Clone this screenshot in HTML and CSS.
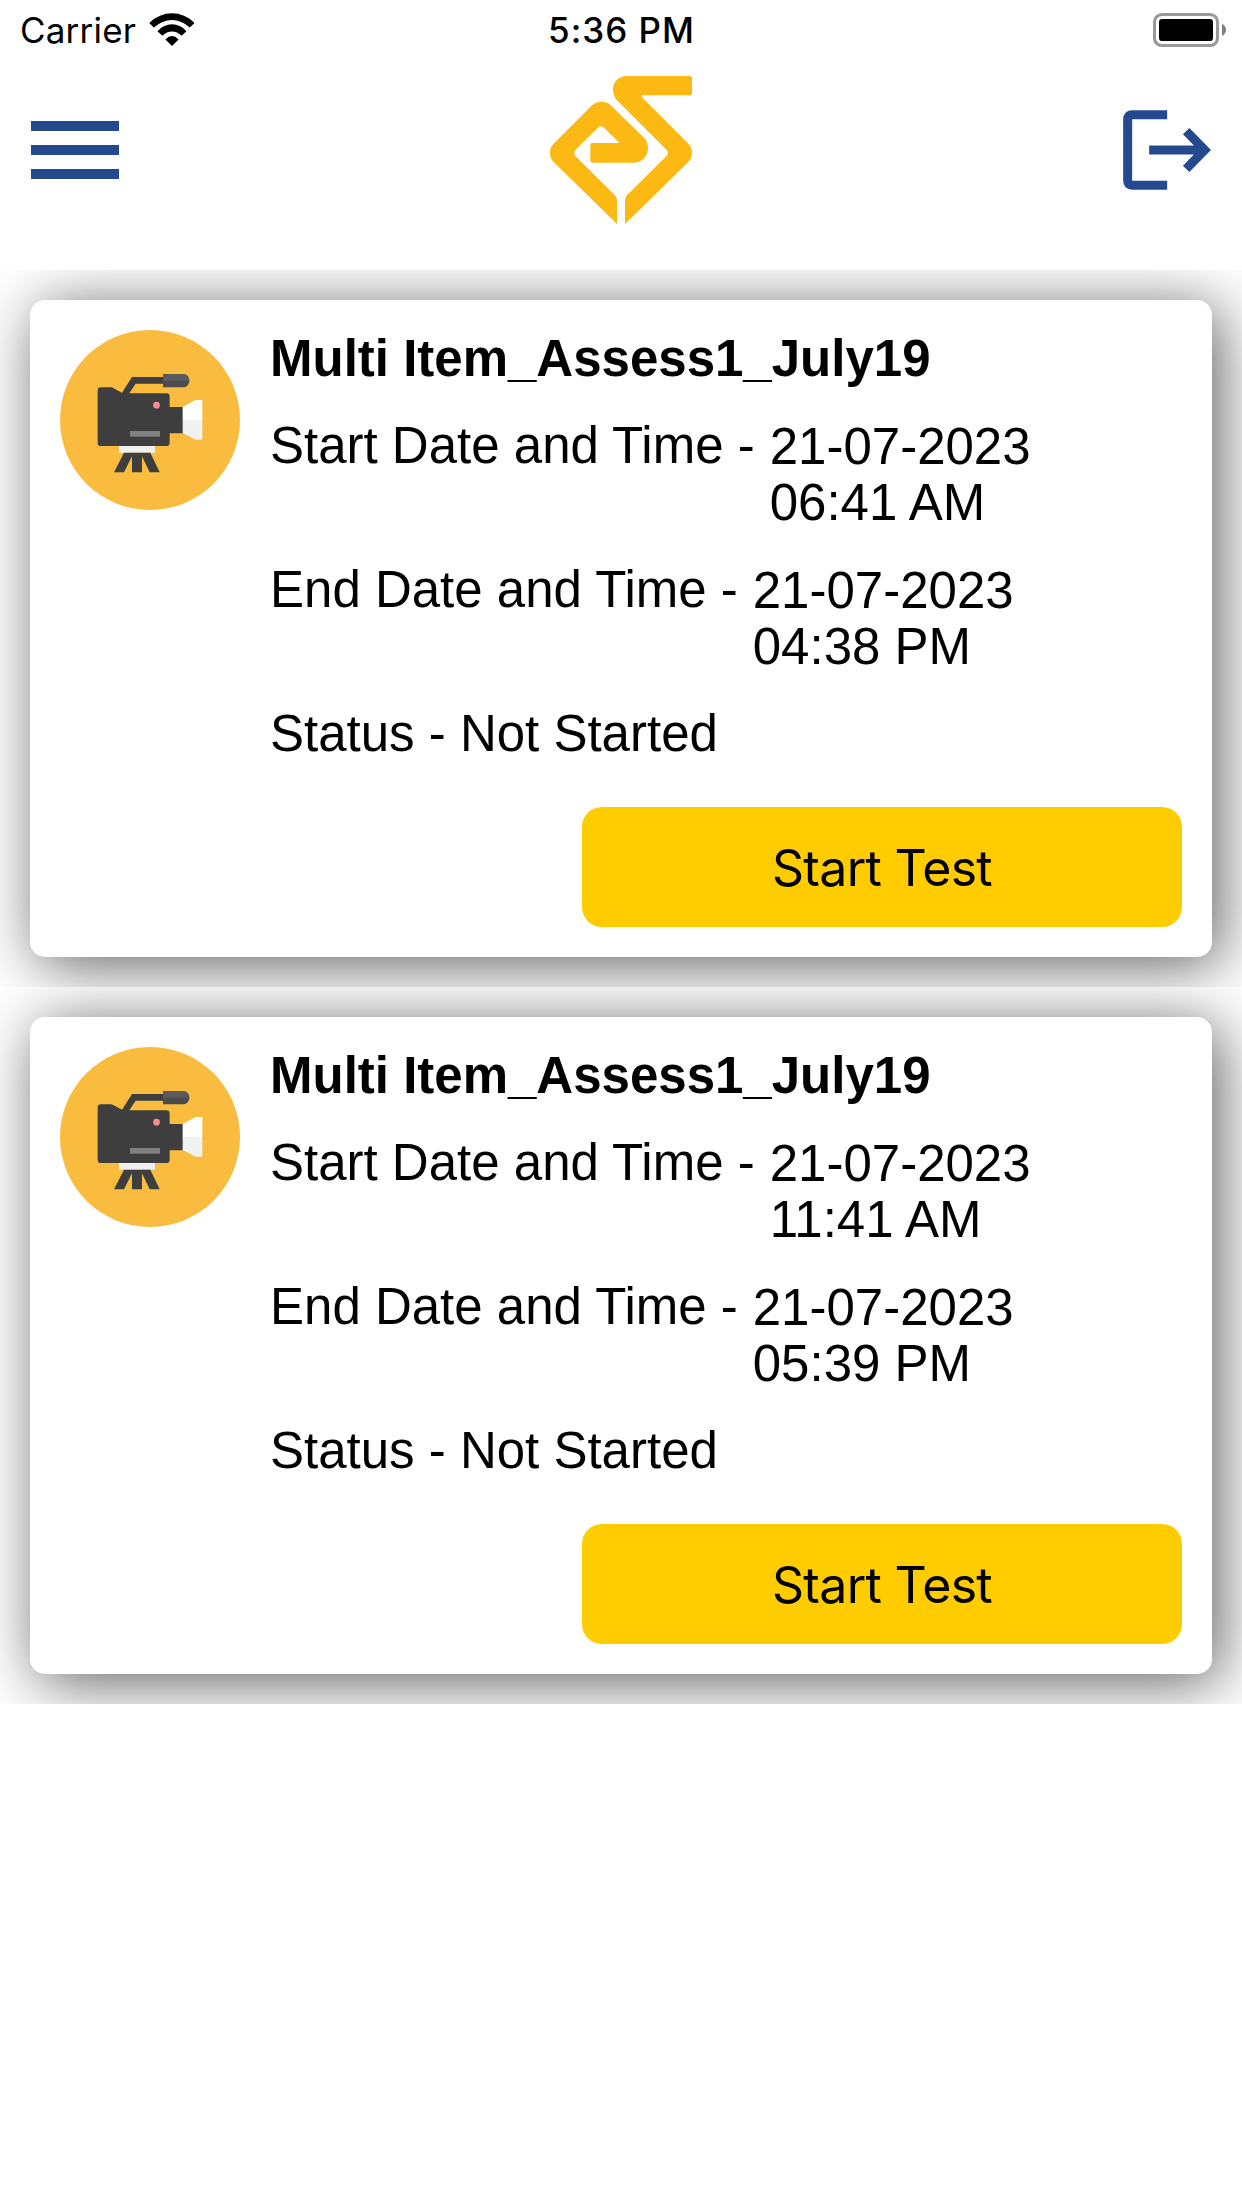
FILE: index.html
```html
<!DOCTYPE html>
<html lang="en">
<head>
<meta charset="utf-8">
<title>Assessments</title>
<link rel="stylesheet" href="styles.css">
</head>
<body>
<svg class="defs" aria-hidden="true">
  <symbol id="camera" viewBox="30 30 540 540">
    <circle cx="300" cy="300" r="270" fill="#f9bc3f"/>
    <path d="M207 378h108v20H207z" fill="#f0f0f0"/>
    <path d="M222 398h79l28 59h-30l-23-48v48h-30v-48l-24 48h-30z" fill="#3e3e3f"/>
    <path d="M216 218l30-47h94v20h-83l-19 29h111q10 0 10 10v31h40v79h-40v28q0 10-10 10H153q-10 0-10-10V212q0-10 10-10h29q5 0 9 3z" fill="#3e3e3f"/>
    <path d="M339 162h60a19 20 0 0 1 0 40h-60z" fill="#4b4b4d"/>
    <path d="M339 162h60q18 1 19 20h-79z" fill="#5b5b5e"/>
    <circle cx="319.500" cy="255.500" r="10" fill="#fb8c90"/>
    <path d="M240 333h90v17h-90z" fill="#818183"/>
    <path d="M398 261l39-21h20v60h-59z" fill="#fff"/>
    <path d="M398 300h59v59h-20l-39-20z" fill="#f0f1f1"/>
  </symbol>
</svg>
<div class="status-bar">
  <div class="carrier">
    <span>Carrier</span>
    <svg class="wifi" viewBox="447 38 138 100">
      <path d="M447 68Q478 39 516 39T584 68L570 82Q545 59 516 59T461 82z"/>
      <path d="M472 93Q491 72 516 72T560 93L545 107Q532 94 516 94T487 107z"/>
      <path d="M496 118Q516 98 536 118L516 138z"/>
    </svg>
  </div>
  <div class="clock">5:36 PM</div>
  <svg class="battery" viewBox="189 39 219 102">
    <rect x="193.500" y="43.500" width="189" height="93" rx="22" fill="#fff" stroke="#999" stroke-width="9"/>
    <rect x="207" y="57" width="162" height="66" rx="10"/>
    <path d="M396 71q12 7 12 18.500T396 108z" fill="#808080"/>
  </svg>
</div>
<header class="header">
  <button class="menu" aria-label="Menu"><span></span><span></span><span></span></button>
  <svg class="logo" viewBox="60 228 426 444" fill="#fcb813">
    <path d="M261 672L71 486Q60 475 60 458T71 431L186 316Q198 305 215 305T242 316L342 413Q354 425 354 443C354 470 335 488 308 488H188Q181 488 181 481V436Q181 429 188 429H268L222 383Q214 375 205 382L136 450Q129 459 136 468L255 586Q261 592 261 600z"/>
    <path d="M285 672V600Q285 592 291 586L410 468Q417 459 410 450L260 300Q249 288 249 268C249 245 267 228 290 228H478Q486 228 486 236V278Q486 286 478 286H336V292L475 431Q486 442 486 458T475 486z"/>
  </svg>
  <svg class="logout" viewBox="99 330 263 240" fill="none" stroke="#24498f" stroke-width="27">
    <path d="M231 344.500H126Q112.500 344.500 112.500 358V542Q112.500 555.500 126 555.500H231M177 450H340M288 393.500L343.500 450L288 506.500"/>
  </svg>
</header>
<main class="list">
  <section class="cell">
    <article class="card">
      <svg class="avatar"><use href="#camera"/></svg>
      <div class="info">
        <h2 class="title">Multi Item_Assess1_July19</h2>
        <div class="row"><span>Start Date and Time -</span><span class="date">21-07-2023<br>06:41 AM</span></div>
        <div class="row"><span>End Date and Time -</span><span class="date">21-07-2023<br>04:38 PM</span></div>
        <div class="state">Status - Not Started</div>
        <button class="start">Start Test</button>
      </div>
    </article>
  </section>
  <section class="cell">
    <article class="card">
      <svg class="avatar"><use href="#camera"/></svg>
      <div class="info">
        <h2 class="title">Multi Item_Assess1_July19</h2>
        <div class="row"><span>Start Date and Time -</span><span class="date">21-07-2023<br>11:41 AM</span></div>
        <div class="row"><span>End Date and Time -</span><span class="date">21-07-2023<br>05:39 PM</span></div>
        <div class="state">Status - Not Started</div>
        <button class="start">Start Test</button>
      </div>
    </article>
  </section>
</main>
</body>
</html>
```
FILE: styles.css
```css
* { box-sizing: border-box; }
body {
  margin: 0;
  background: #fff;
  color: #000;
  font-family: "Liberation Sans", Arial, sans-serif;
}
.defs { display: block; width: 0; height: 0; }
svg { display: block; }
button { border: 0; padding: 0; background: none; color: inherit; }

.status-bar {
  display: grid;
  grid-template-columns: 1fr auto 1fr;
  align-items: center;
  height: 60px;
  padding: 0 16px 0 20px;
  font-family: Inter, sans-serif;
  font-size: 35px;
  line-height: 60px;
}
.carrier { display: flex; align-items: center; gap: 13px; letter-spacing: 0.2px; }
.wifi { width: 46px; height: 33px; margin-top: -2px; }
.clock { margin-right: 3px; font-weight: 500; letter-spacing: 1px; }
.battery { justify-self: end; width: 73px; height: 34px; }

.header {
  display: grid;
  grid-template-columns: 1fr auto 1fr;
  align-items: center;
  height: 210px;
  padding: 16px 31px 46px;
}
.menu { display: flex; flex-direction: column; gap: 14.3px; width: 88px; }
.menu span { height: 9.8px; background: #24498f; }
.logo { width: 142px; height: 148px; }
.logout { justify-self: end; width: 88px; height: 80px; }

.cell { height: 717px; padding: 30px; overflow: hidden; }
.card {
  display: flex;
  gap: 30px;
  height: 657px;
  padding: 30px;
  border-radius: 15px;
  background: #fff;
  box-shadow: 8px 8px 62px rgba(0, 0, 0, 0.63);
}
.avatar { flex: none; width: 180px; height: 180px; }
.info {
  display: flex;
  flex: 1;
  flex-direction: column;
  gap: 31px;
  padding-top: 1px;
  font-size: 51px;
  line-height: 56px;
}
.title { margin: 0; font-size: 51px; font-weight: 700; }
.row { display: flex; gap: 15px; }
.date { padding-top: 1px; }
.start {
  align-self: flex-end;
  width: 600px;
  height: 120px;
  margin-top: 14px;
  padding-top: 2px;
  border-radius: 20px;
  background: #fc0;
  font-family: Inter, sans-serif;
  font-size: 50px;
  letter-spacing: -0.7px;
}
```
